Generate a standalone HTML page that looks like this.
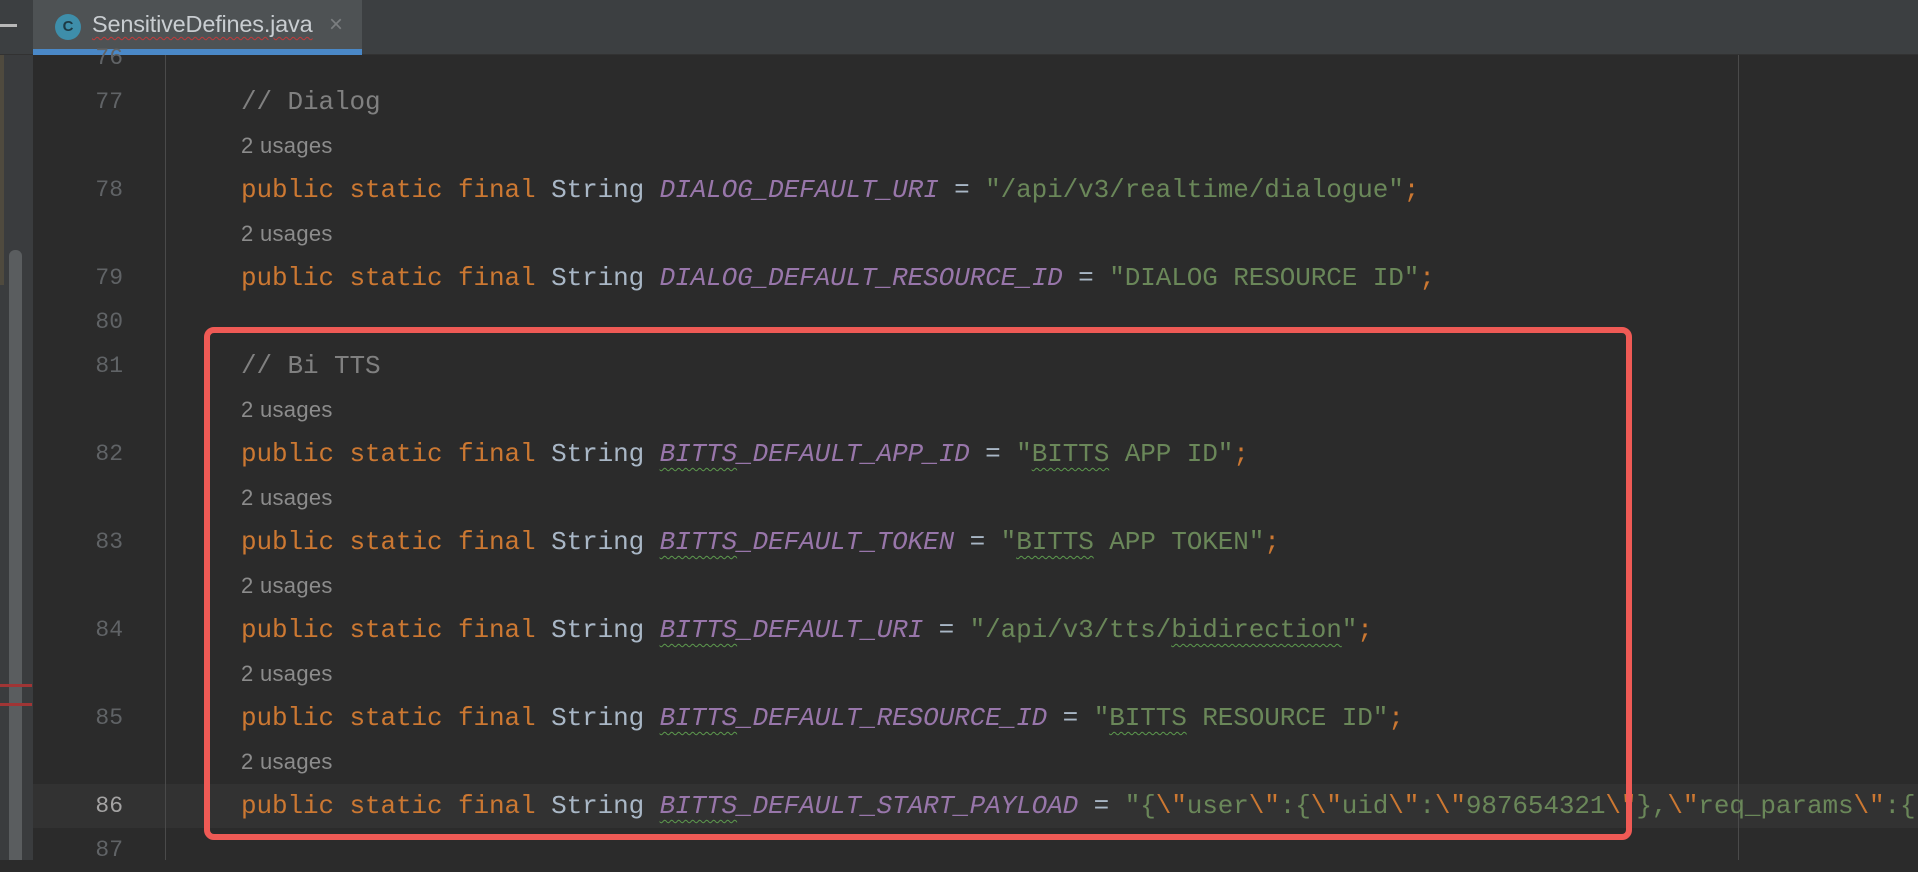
<!DOCTYPE html>
<html><head><meta charset="utf-8"><style>
*{margin:0;padding:0;box-sizing:border-box}
body{width:1918px;height:860px;background:#2b2b2b;overflow:hidden;position:relative;font-family:"Liberation Mono",monospace}
#tabbar{position:absolute;left:0;top:0;width:1918px;height:55px;background:#3c3f41;border-bottom:1px solid #323232}
#tab{position:absolute;left:33px;top:0;width:329px;height:55px;background:#4e5254}
#tab .ul{position:absolute;left:0;bottom:0;width:100%;height:6px;background:#4a88c7}
#tab .ic{position:absolute;left:22px;top:14px;width:26px;height:26px;border-radius:50%;background:#3e8eaa;color:#1d3a45;font:bold 15px "Liberation Sans",sans-serif;text-align:center;line-height:26px}
#tab .t{position:absolute;left:59px;top:11px;font:23.5px "Liberation Sans",sans-serif;color:#c9cdd1;text-decoration:underline wavy #c23b3b;text-decoration-thickness:1px;text-underline-offset:4px;letter-spacing:-0.2px}
#tab .x{position:absolute;left:296px;top:11px;font:24px "Liberation Sans",sans-serif;color:#7b7e80}
#minus{position:absolute;left:0;top:24px;width:17px;height:3px;background:#b8b8b8}
#left{position:absolute;left:0;top:55px;width:33px;height:805px;background:#3a3c3e}
#left .sh{position:absolute;left:0;top:0;width:4px;height:230px;background:#4f4a3e}
#left .sb{position:absolute;left:9px;top:195px;width:13px;height:610px;background:#5a5d5f;border-radius:6px 6px 0 0}
.rm{position:absolute;left:0;width:32px;height:3px;background:#a03535}
#gutter{position:absolute;left:33px;top:55px;width:132px;height:805px;background:#2b2b2b}
#sep{position:absolute;left:165px;top:55px;width:1px;height:805px;background:#4a4a4a}
#margin{position:absolute;left:1738px;top:55px;width:1px;height:805px;background:#4a4a4a}
#cur{position:absolute;left:33px;top:784px;width:1885px;height:44px;background:#323232}
.ln{position:absolute;left:33px;width:90px;text-align:right;font-size:23px;color:#606366;line-height:44px;height:44px}
.code{position:absolute;left:241px;font-size:26px;line-height:44px;height:44px;white-space:pre;color:#a9b7c6;letter-spacing:-0.1px}
.us{position:absolute;left:241px;font:22px "Liberation Sans",sans-serif;color:#8c8c8c;line-height:44px;height:44px;letter-spacing:0.3px}
.k{color:#cc7832}.c{color:#9876aa;font-style:italic}.s{color:#6a8759}.cm{color:#808080}
.w{text-decoration:underline wavy #5d9a4e;text-decoration-thickness:1px;text-underline-offset:6px}
#box{position:absolute;left:204px;top:327px;width:1428px;height:513px;border:6px solid #ef5a55;border-radius:10px}
</style></head><body>
<div id="tabbar"><div id="minus"></div><div id="tab"><div class="ic">C</div><div class="t">SensitiveDefines.java</div><div class="x">×</div><div class="ul"></div></div></div>
<div id="left"><div class="sh"></div><div class="sb"></div></div>
<div class="rm" style="top:684px"></div><div class="rm" style="top:703px"></div>
<div id="gutter"></div>
<div id="cur"></div>
<div id="sep"></div><div id="margin"></div>

<div class="ln" style="top:36px">76</div>
<div class="ln" style="top:80px">77</div>
<div class="ln" style="top:168px">78</div>
<div class="ln" style="top:256px">79</div>
<div class="ln" style="top:300px">80</div>
<div class="ln" style="top:344px">81</div>
<div class="ln" style="top:432px">82</div>
<div class="ln" style="top:520px">83</div>
<div class="ln" style="top:608px">84</div>
<div class="ln" style="top:696px">85</div>
<div class="ln" style="top:784px;color:#a4a3a3">86</div>
<div class="ln" style="top:828px">87</div>

<div class="code cm" style="top:80px">// Dialog</div>
<div class="us" style="top:124px">2 usages</div>
<div class="code" style="top:168px"><span class="k">public static final </span>String <span class="c">DIALOG_DEFAULT_URI</span> = <span class="s">"/api/v3/realtime/dialogue"</span><span class="k">;</span></div>
<div class="us" style="top:212px">2 usages</div>
<div class="code" style="top:256px"><span class="k">public static final </span>String <span class="c">DIALOG_DEFAULT_RESOURCE_ID</span> = <span class="s">"DIALOG RESOURCE ID"</span><span class="k">;</span></div>
<div class="code cm" style="top:344px">// Bi TTS</div>
<div class="us" style="top:388px">2 usages</div>
<div class="code" style="top:432px"><span class="k">public static final </span>String <span class="c"><span class="w">BITTS</span>_DEFAULT_APP_ID</span> = <span class="s">"<span class="w">BITTS</span> APP ID"</span><span class="k">;</span></div>
<div class="us" style="top:476px">2 usages</div>
<div class="code" style="top:520px"><span class="k">public static final </span>String <span class="c"><span class="w">BITTS</span>_DEFAULT_TOKEN</span> = <span class="s">"<span class="w">BITTS</span> APP TOKEN"</span><span class="k">;</span></div>
<div class="us" style="top:564px">2 usages</div>
<div class="code" style="top:608px"><span class="k">public static final </span>String <span class="c"><span class="w">BITTS</span>_DEFAULT_URI</span> = <span class="s">"/api/v3/tts/<span class="w">bidirection</span>"</span><span class="k">;</span></div>
<div class="us" style="top:652px">2 usages</div>
<div class="code" style="top:696px"><span class="k">public static final </span>String <span class="c"><span class="w">BITTS</span>_DEFAULT_RESOURCE_ID</span> = <span class="s">"<span class="w">BITTS</span> RESOURCE ID"</span><span class="k">;</span></div>
<div class="us" style="top:740px">2 usages</div>
<div class="code" style="top:784px"><span class="k">public static final </span>String <span class="c"><span class="w">BITTS</span>_DEFAULT_START_PAYLOAD</span> = <span class="s">"{<span class="k">\"</span>user<span class="k">\"</span>:{<span class="k">\"</span>uid<span class="k">\"</span>:<span class="k">\"</span>987654321<span class="k">\"</span>},<span class="k">\"</span>req_params<span class="k">\"</span>:{</span></div>

<div id="box"></div>
</body></html>
